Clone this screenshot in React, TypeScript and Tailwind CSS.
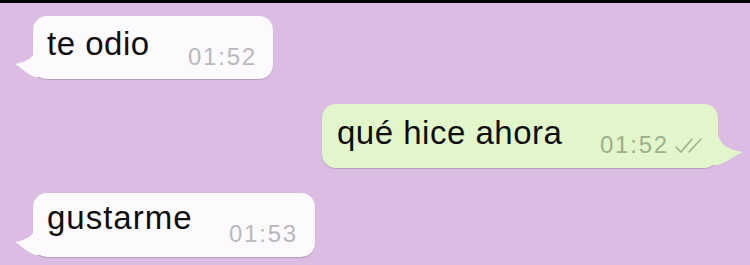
const sans = { fontFamily: '"Liberation Sans", Arial, sans-serif' };

function TailLeft({ color }: { color: string }) {
  return (
    <svg
      className="absolute left-[-18px] bottom-[1px]"
      width="24"
      height="28"
      viewBox="0 0 24 28"
    >
      <path d="M24 0 L20 0 C19 7 12 12 0 14 C6 17 10 23 20 27 L24 27 Z" fill={color} />
    </svg>
  );
}

function TailRight({ color }: { color: string }) {
  return (
    <svg
      className="absolute right-[-25px] bottom-[2px]"
      width="30"
      height="32"
      viewBox="0 0 30 32"
    >
      <path d="M0 0 L5 0 C6 9 14 16 30 18 C22 21 16 27 5 31 L0 31 Z" fill={color} />
    </svg>
  );
}

function Checks() {
  return (
    <svg width="32" height="18" viewBox="0 0 32 18" className="ml-[5px] mb-[2px]">
      <path d="M2 10 L7 15 L18 2" stroke="#9db08d" strokeWidth="1.6" fill="none" strokeLinecap="round" />
      <path d="M15 15 L27 2" stroke="#9db08d" strokeWidth="1.6" fill="none" strokeLinecap="round" />
    </svg>
  );
}

export default function App() {
  return (
    <div className="w-[750px] h-[265px] bg-[#dbbde3] overflow-hidden" style={sans}>
      <div className="h-[3px] bg-black" />

      {/* recibido */}
      <div className="pl-[33px] pt-[13px]">
        <div className="relative w-[240px] h-[63px] rounded-[14px] bg-[#fcfafd] shadow-[0_1px_1px_rgba(0,0,0,0.18)] flex items-end justify-between pl-[14px] pr-[16px] pb-[10px]">
          <TailLeft color="#fcfafd" />
          <span className="text-[33px] leading-none text-[#0e0e0e] tracking-[0.5px] mb-[9px]">te odio</span>
          <span className="text-[24px] leading-none text-[#b9b9bb] tracking-[1.8px]">01:52</span>
        </div>
      </div>

      {/* enviado */}
      <div className="pl-[322px] pt-[25px]">
        <div className="relative w-[396px] h-[64px] rounded-[14px] bg-[#e2f6cc] shadow-[0_1px_1px_rgba(0,0,0,0.18)] flex items-end justify-between pl-[15px] pr-[12px] pb-[11px]">
          <TailRight color="#e2f6cc" />
          <span className="text-[33px] leading-none text-[#0e0e0e] tracking-[0.5px] mb-[8px]">qué hice ahora</span>
          <span className="flex items-end">
            <span className="text-[24px] leading-none text-[#9db08d] tracking-[1.8px]">01:52</span>
            <Checks />
          </span>
        </div>
      </div>

      {/* recibido */}
      <div className="pl-[33px] pt-[25px]">
        <div className="relative w-[282px] h-[64px] rounded-[14px] bg-[#fcfafd] shadow-[0_1px_1px_rgba(0,0,0,0.18)] flex items-end justify-between pl-[14px] pr-[17px] pb-[11px]">
          <TailLeft color="#fcfafd" />
          <span className="text-[33px] leading-none text-[#0e0e0e] tracking-[1px] mb-[12px]">gustarme</span>
          <span className="text-[24px] leading-none text-[#b9b9bb] tracking-[1.8px]">01:53</span>
        </div>
      </div>
    </div>
  );
}
